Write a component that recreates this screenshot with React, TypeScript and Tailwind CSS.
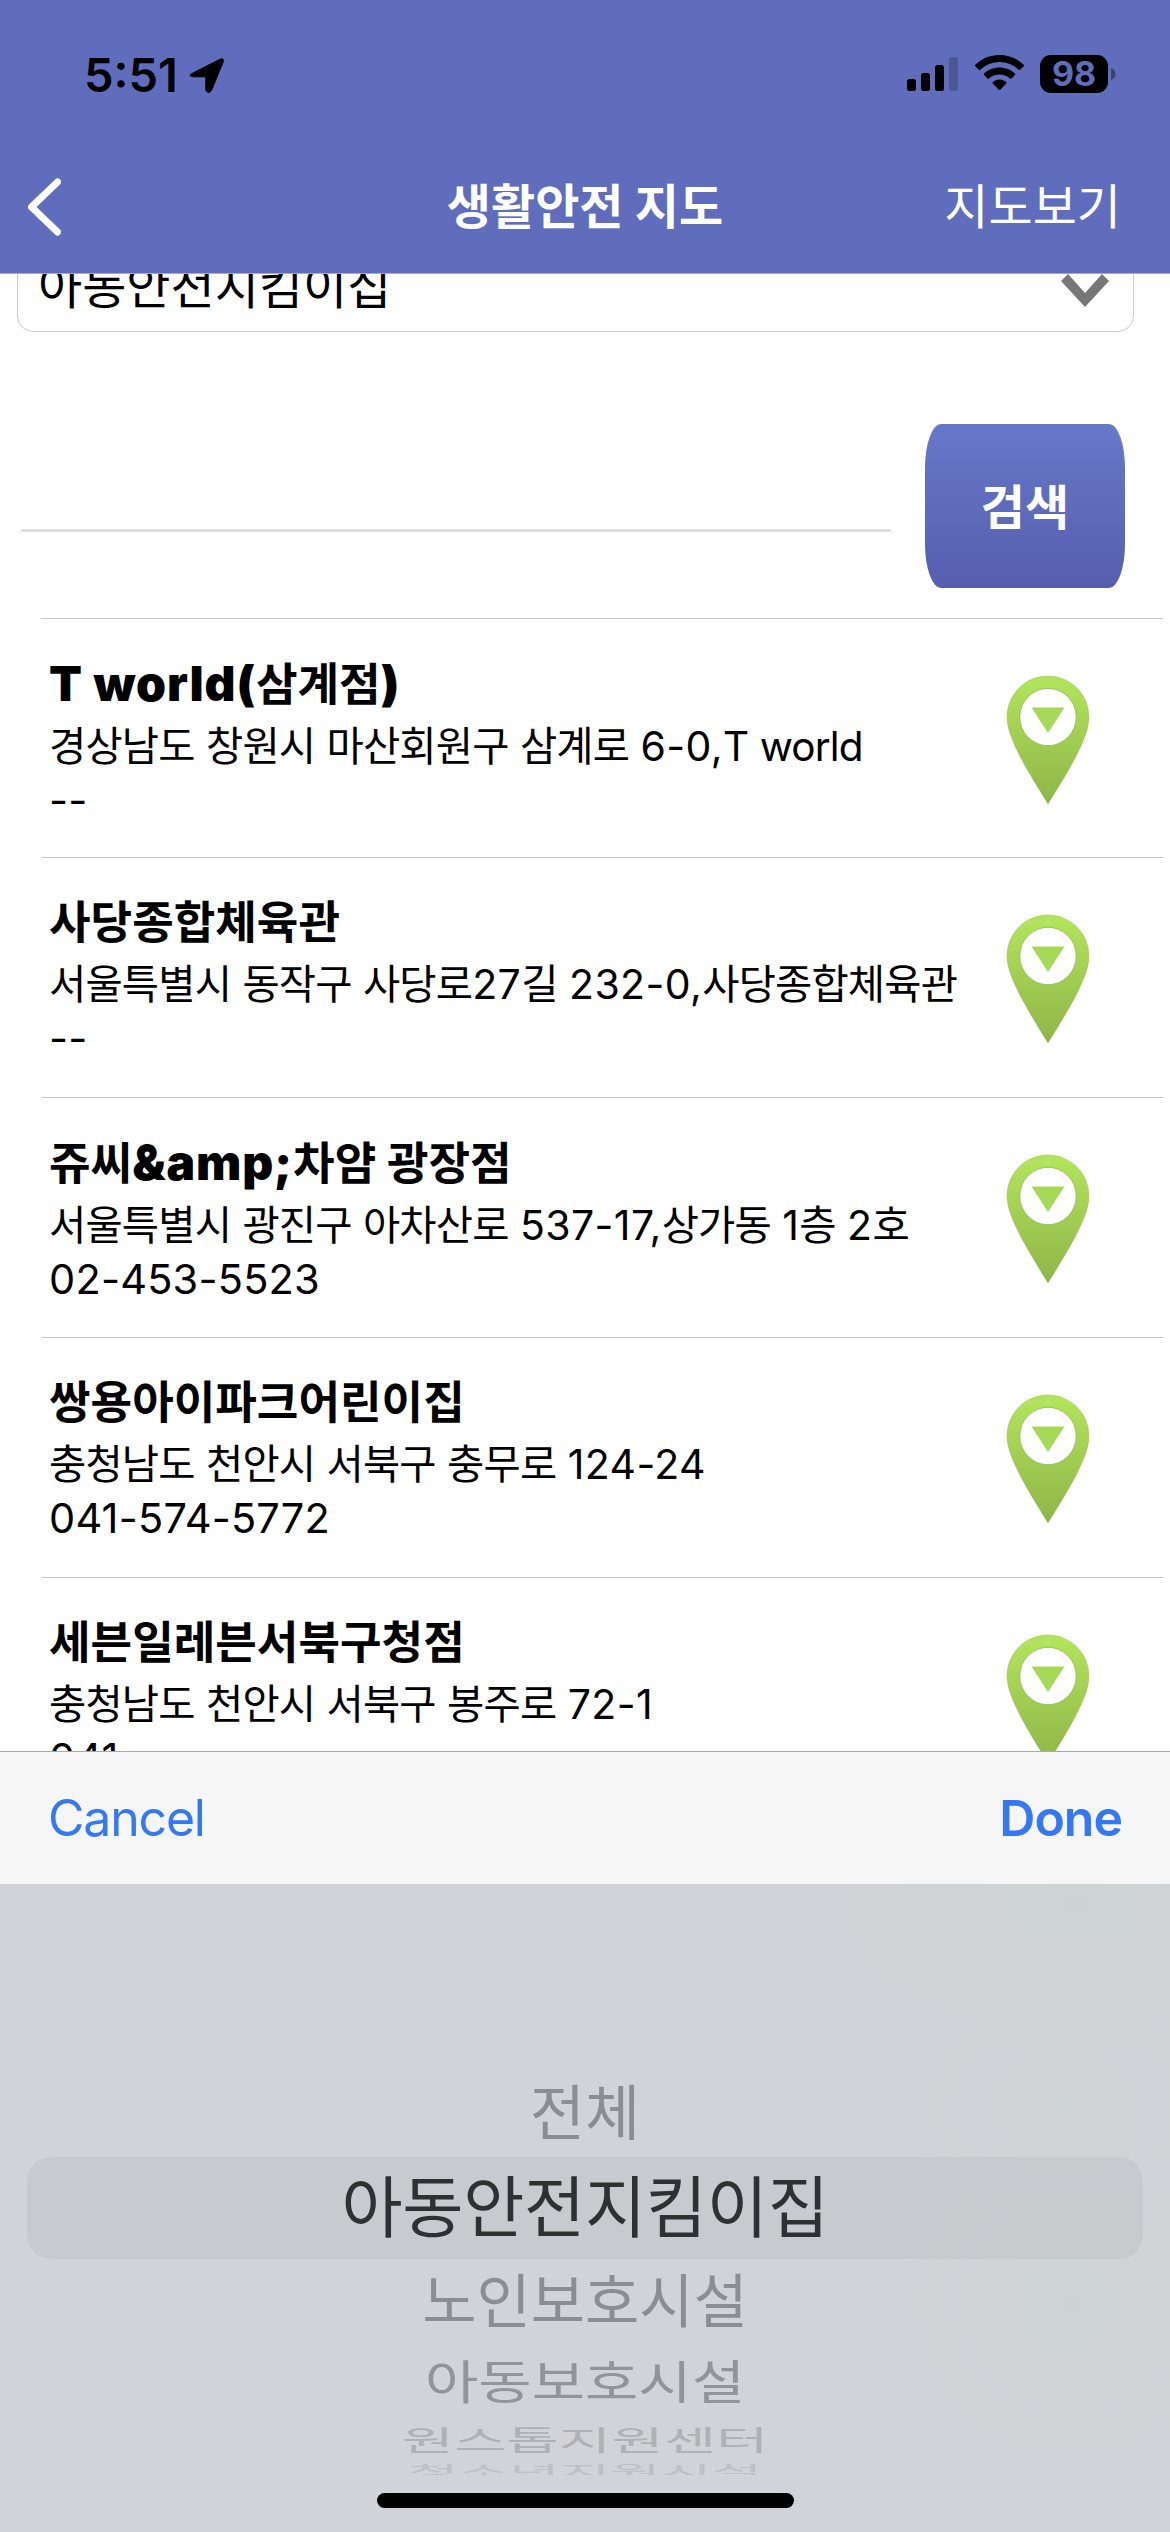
interface Place {
    name: string;
    address: string;
    phone: string;
}

const places: Place[] = [
    { name: "T world(삼계점)", address: "경상남도 창원시 마산회원구 삼계로 6-0,T world", phone: "--" },
    { name: "사당종합체육관", address: "서울특별시 동작구 사당로27길 232-0,사당종합체육관", phone: "--" },
    { name: "쥬씨&amp;차얌 광장점", address: "서울특별시 광진구 아차산로 537-17,상가동 1층 2호", phone: "02-453-5523" },
    { name: "쌍용아이파크어린이집", address: "충청남도 천안시 서북구 충무로 124-24", phone: "041-574-5772" },
    { name: "세븐일레븐서북구청점", address: "충청남도 천안시 서북구 봉주로 72-1", phone: "041--" },
];

interface MixedTextProps {
    text: string;
    pattern: RegExp;
    className: string;
}

// Runs that match the pattern get their own classes, the rest keeps the parent's
function MixedText({ text, pattern, className }: MixedTextProps) {
    return text.split(pattern).map((part, i) =>
        i % 2 === 1 ? (
            <span key={i} className={className}>
                {part}
            </span>
        ) : (
            part
        )
    );
}

function StatusBar() {
    return (
        <div className="flex h-[147px] items-start justify-between pl-[84px] pr-[54px] pt-[54px] text-black">
            <div className="flex items-center gap-[13px]">
                <span className="w-[92px] text-[47px] font-semibold leading-[41px]">5:51</span>
                <svg width="37" height="38" viewBox="0 0 37 38" className="mt-px">
                    <path d="M3 17.5 31 3.2Q35.500 1.500 34 6.500L22.500 34.500Q20.500 38 17.500 35.500Q16.800 34.500 16.800 33V21.500Q16.800 20.800 16 20.800H4Q-1.500 20 3 17.500Z" stroke="#000" strokeWidth="1" />
                </svg>
            </div>
            <div className="flex items-start">
                <svg width="52" height="36" viewBox="0 0 52 36" className="mt-[2px]">
                    <rect x="0" y="23" width="9" height="12" rx="2.500" />
                    <rect x="14" y="17" width="9" height="18" rx="2.500" />
                    <rect x="28" y="9" width="9" height="26" rx="2.500" />
                    <rect x="42" y="1" width="9" height="34" rx="2.500" opacity="0.2" />
                </svg>
                <svg width="49" height="36" viewBox="0 0 49 36" className="ml-4 mt-px">
                    <path d="M24.500 0C33.900 0 42.400 3.700 48.700 9.800Q49.300 10.500 48.700 11.200L45.200 14.800Q44.500 15.500 43.800 14.800A27.500 27.500 0 0 0 5.200 14.800Q4.500 15.500 3.800 14.800L.3 11.200Q-.3 10.500.3 9.800C6.600 3.700 15.100 0 24.500 0Z" />
                    <path d="M24.500 12.500C30.500 12.500 35.900 14.800 40 18.600Q40.700 19.300 40 20L36.500 23.600Q35.800 24.200 35.100 23.600A15.700 15.700 0 0 0 13.900 23.600Q13.200 24.200 12.500 23.600L9 20Q8.300 19.300 9 18.600C13.100 14.800 18.500 12.500 24.500 12.500Z" />
                    <path d="M24.500 24.500C27.100 24.500 29.400 25.500 31.200 27Q31.900 27.700 31.200 28.400L25.300 34.700Q24.500 35.400 23.700 34.700L17.800 28.400Q17.100 27.700 17.800 27C19.600 25.500 21.900 24.500 24.500 24.500Z" />
                </svg>
                <span className="ml-4 mt-px flex h-[38px] w-[68px] items-center justify-center rounded-[11px] bg-black text-[34px] font-bold leading-none text-[#606dbc]">
                    98
                </span>
                <svg width="5" height="12" viewBox="0 0 5 12" className="ml-[3px] mt-[14px]">
                    <path d="M0 0Q4.500 1.500 4.500 6T0 12Z" opacity="0.4" />
                </svg>
            </div>
        </div>
    );
}

function Pin() {
    return (
        <svg width="84" height="130" viewBox="0 0 84 130">
            <defs>
                <linearGradient id="pin" x1="0" y1="0" x2="0" y2="1">
                    <stop offset="0.05" stopColor="#b1e35b" />
                    <stop offset="1" stopColor="#8fb548" />
                </linearGradient>
            </defs>
            <path
                d="M42 1C64.500 1 83 19 83 42C83 49 81 57 77.500 65C69 86 56 106 42 129C28 106 15 86 6.500 65C3 57 1 49 1 42C1 19 19.500 1 42 1Z"
                fill="url(#pin)"
                stroke="#7ba13a"
                strokeOpacity="0.5"
                strokeWidth="0.6"
            />
            <ellipse cx="42" cy="42" rx="28.200" ry="28.600" fill="#fff" stroke="#7ba13a" strokeOpacity="0.7" strokeWidth="0.8" />
            <path d="M25.500 32.500H58.500L42 58Z" fill="#a8d858" />
        </svg>
    );
}

function PlaceRow({ name, address, phone }: Place) {
    return (
        <li className="ml-[41px] mr-[7px] flex h-60 shrink-0 items-start justify-between border-b border-[#c8c7cc] pl-[8px] pr-[73px] first:border-t">
            <div className="pt-[33px] text-black">
                <h2 className="whitespace-nowrap text-[45.2px] font-bold leading-[64px]">
                    <MixedText text={name} pattern={/([!-~]+)/} className="text-[48px] font-black tracking-[0.9px]" />
                </h2>
                <p className="mt-[2px] whitespace-nowrap text-[40.5px] leading-[54px] tracking-[-0.85px] [word-spacing:0.8px]">
                    <MixedText text={address} pattern={/([\d,-]+)/} className="text-[41px] tracking-[0.4px]" />
                </p>
                <p className="-mt-px whitespace-nowrap text-[41.500px] leading-[54px] tracking-[0.2px]">{phone}</p>
            </div>
            <div className="-ml-10 pt-14">
                <Pin />
            </div>
        </li>
    );
}

function Picker() {
    return (
        <div className="flex h-[648px] flex-col items-center overflow-hidden whitespace-nowrap bg-[#d2d3d8] bg-[radial-gradient(ellipse_260px_150px_at_1075px_20px,#ced4d4,transparent),radial-gradient(ellipse_170px_130px_at_1065px_220px,#cfd4d6,transparent),radial-gradient(ellipse_180px_180px_at_1070px_420px,#ced4d5,transparent)] pt-[185px]">
            <div className="flex h-[88px] items-center text-[60px] leading-none text-[#8c8d90]">전체</div>
            <div className="flex h-[102px] w-[1116px] items-center justify-center rounded-3xl bg-black/4 text-[66.500px] leading-none tracking-[-0.3px] text-[#2f3032]">
                아동안전지킴이집
            </div>
            <div className="flex h-[84px] items-center text-[59px] leading-none text-[#8c8d90]">노인보호시설</div>
            <div className="flex h-[78px] items-center text-[58px] leading-none text-[#939497]">
                <span className="scale-y-80">아동보호시설</span>
            </div>
            <div className="flex h-[39px] items-center text-[57px] leading-none text-[#b0b1b5]">
                <span className="scale-y-50">원스톱지원센터</span>
            </div>
            {/* the last option turns away at the edge of the wheel */}
            <div className="mt-[4px] flex h-[11px] items-start overflow-hidden text-[55px] leading-none text-[#bfc0c4]">
                <span className="origin-top scale-y-30">청소년지원시설</span>
            </div>
            <div className="mt-[18px] h-[15px] w-[417px] rounded-full bg-black" />
        </div>
    );
}

export default function App() {
    return (
        <div
            lang="ko"
            className="flex h-[2532px] w-[1170px] flex-col overflow-hidden bg-white font-['Inter','Noto_Sans_CJK_KR',sans-serif]"
        >
            <header className="h-[274px] shrink-0 border-b border-[#a5a9c4] bg-[#606dbc]">
                <StatusBar />
                <div className="grid h-[120px] grid-cols-[1fr_auto_1fr] items-center px-[27px] text-white">
                    <svg width="34" height="58" viewBox="0 0 34 58" fill="none" stroke="currentColor" strokeWidth="7" strokeLinecap="round" strokeLinejoin="round">
                        <path d="M30.500 4 4.500 29 30.500 54" />
                    </svg>
                    <h1 className="text-[48px] font-bold leading-none">생활안전 지도</h1>
                    <span className="mr-[22px] justify-self-end text-[48px] leading-none">지도보기</span>
                </div>
            </header>

            <main className="flex h-[1477px] shrink-0 flex-col overflow-hidden">
                <div className="-mt-10 ml-[17px] flex h-[98px] w-[1117px] shrink-0 items-center justify-between rounded-2xl border border-[#ccc] pl-[20px] pr-[23px]">
                    <span className="pt-2 text-[48px] leading-none text-black">아동안전지킴이집</span>
                    <svg width="50" height="34" viewBox="0 0 50 34" className="mt-[13px]">
                        <path d="M1 8 8 1 25 20 42 1 49 8 25 34Z" fill="#777" />
                    </svg>
                </div>
                <div className="mt-[92px] flex h-[164px] shrink-0 items-start pl-[21px]">
                    <div className="h-[108px] w-[870px] border-b-3 border-[#dedede]" />
                    <button className="ml-[34px] h-[164px] w-[200px] rounded-[16px/44px] bg-linear-to-b from-[#6878c8] to-[#565eae] pt-[3px] text-[48px] font-bold leading-none text-white">
                        검색
                    </button>
                </div>
                <ul className="mt-[30px] flex flex-col">
                    {places.map((place) => (
                        <PlaceRow key={place.name} {...place} />
                    ))}
                </ul>
            </main>

            <div className="flex h-[133px] shrink-0 items-center justify-between border-t border-[#a9a9ac] bg-[#f6f6f6] px-[48px] text-[50px] text-[#3478f6]">
                <span className="tracking-[-1.2px]">Cancel</span>
                <span className="font-semibold tracking-[-1px]">Done</span>
            </div>
            <Picker />
        </div>
    );
}
